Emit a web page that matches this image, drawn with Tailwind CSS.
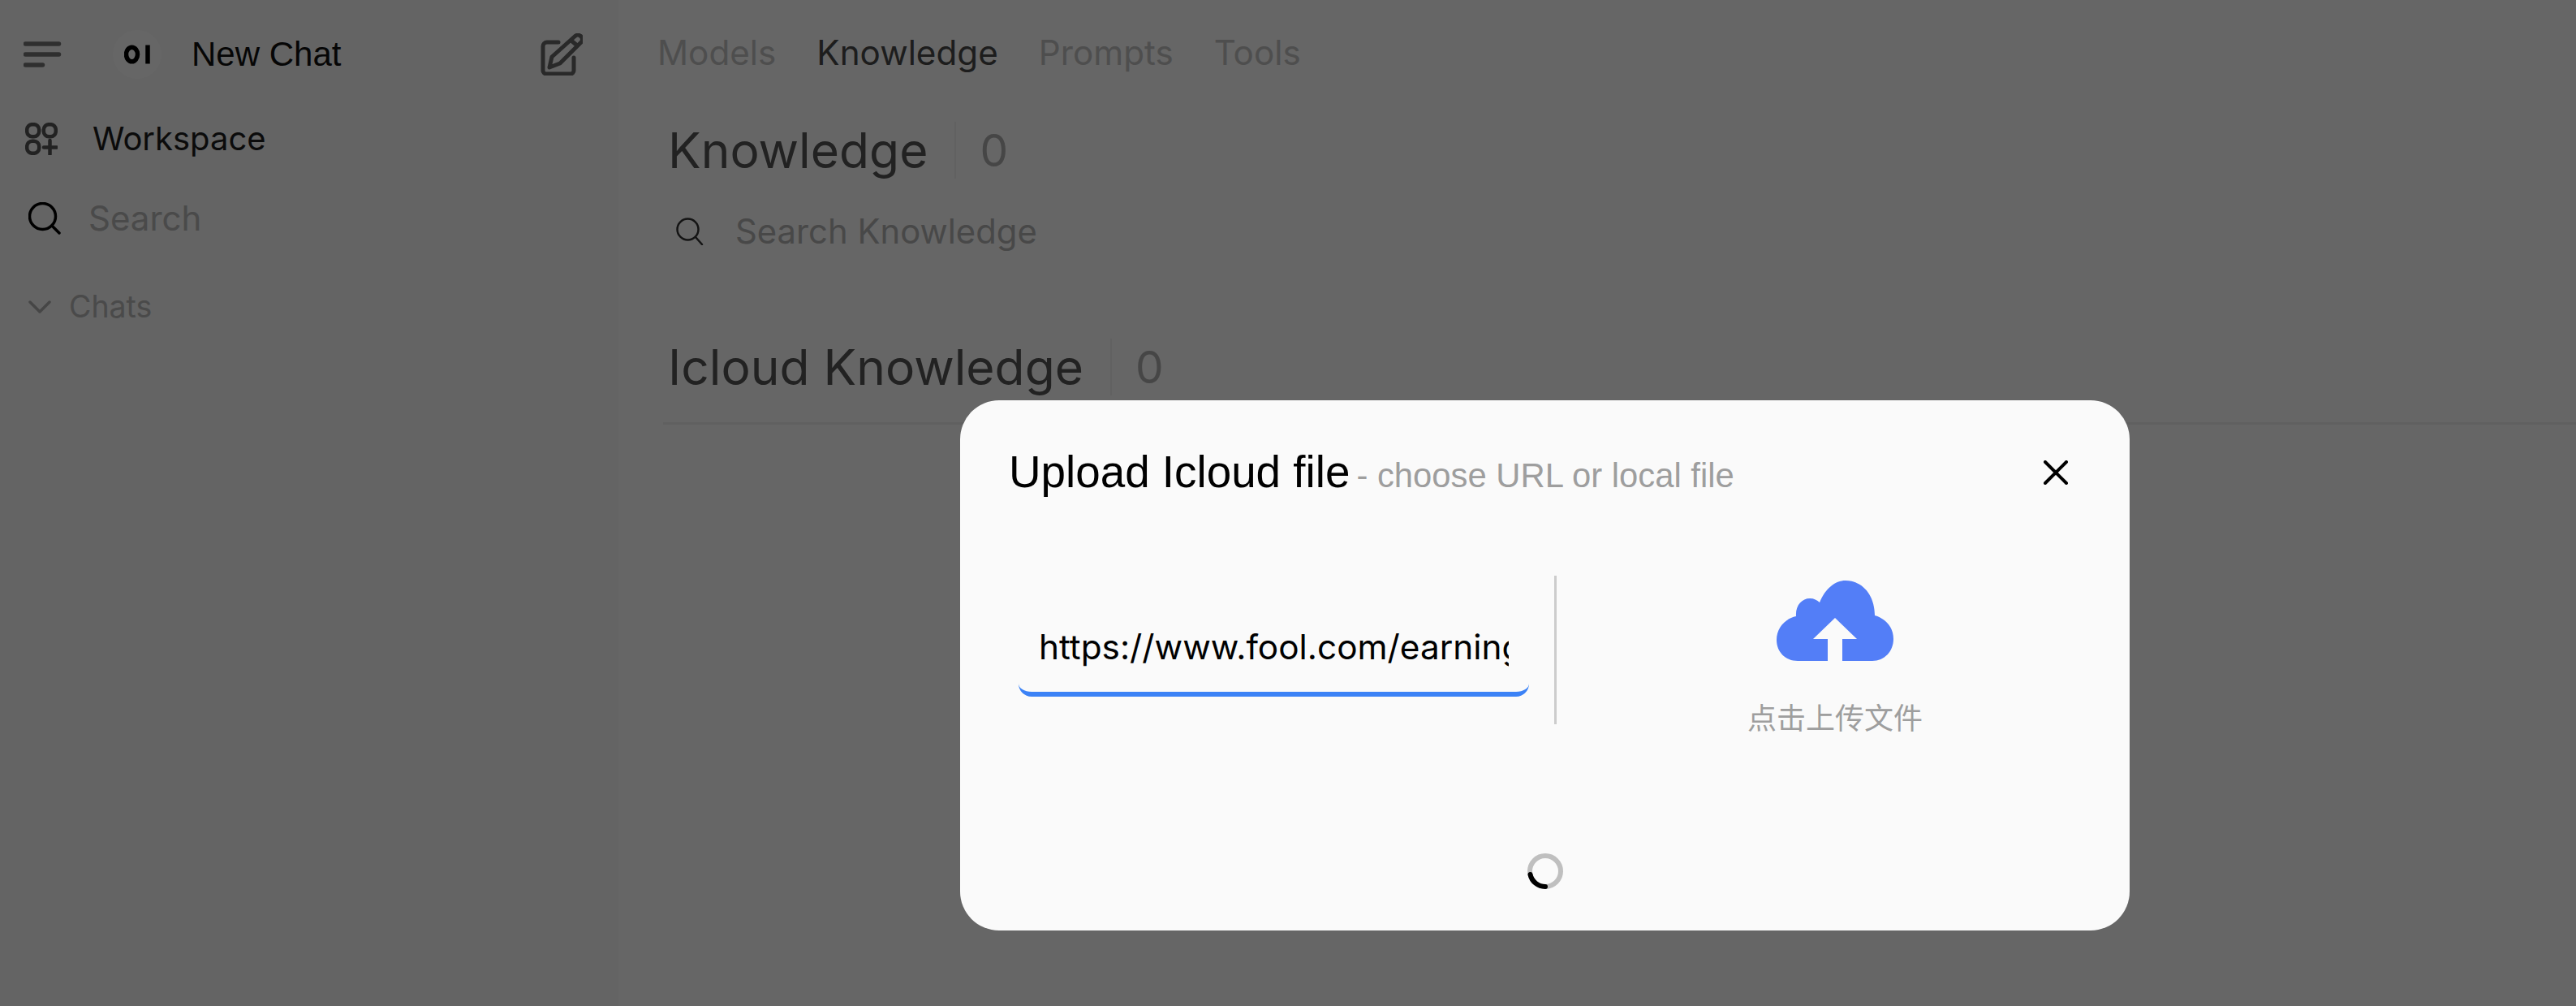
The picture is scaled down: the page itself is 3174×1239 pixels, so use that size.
<!DOCTYPE html>
<html><head><meta charset="utf-8"><script src="https://cdn.jsdelivr.net/npm/@tailwindcss/browser@4"></script></head>
<body class="bg-white font-['Inter','Noto_Sans_CJK_SC',sans-serif]">
<div class="relative w-[3174px] h-[1239px] overflow-hidden flex">
  <aside class="w-[762px] shrink-0 bg-[#f9f9f9] h-full">
    <div class="flex items-center h-[52px] mt-[41px] pl-[29px] pr-[44px]">
      <svg class="w-[48px] h-[48px] text-[#777]" viewBox="0 0 48 48" fill="none" stroke="currentColor" stroke-width="5.500" stroke-linecap="round"><path d="M2.500 11h41M2.500 24h41M2.500 37h21"/></svg>
      <div class="ml-[62px] w-[60px] h-[60px] rounded-full bg-white flex items-center justify-center shrink-0">
        <svg class="w-[33px] h-[24px]" viewBox="0 0 33 24" fill="none" stroke="#000"><ellipse cx="9.500" cy="12" rx="7" ry="8.800" stroke-width="5.500"/><path d="M29 .5v23" stroke-width="5.500"/></svg>
      </div>
      <span class="ml-[37px] text-[42px] font-['Liberation_Sans'] text-[#111] leading-[52px]">New Chat</span>
      <svg class="ml-auto w-[52px] h-[52px] text-[#666]" viewBox="0 0 52 52" fill="none" stroke="currentColor" stroke-width="5" stroke-linecap="round" stroke-linejoin="round"><path d="M22 11H8a5 5 0 0 0-5 5v30a4 4 0 0 0 4 4h30a4 4 0 0 0 4-4V30"/><path d="M42 4a5 5 0 0 1 8 7L24 37l-13 5 3-13L42 4Z"/><path d="M38 9l7 6"/></svg>
    </div>
    <div class="flex items-center h-[52px] mt-[52px] pl-[31px]">
      <svg class="w-[40px] h-[40px] text-[#555]" viewBox="0 0 40 40" fill="none" stroke="currentColor" stroke-width="4.500"><rect x="2.200" y="2.200" width="15" height="15" rx="6.500"/><rect x="22.800" y="2.200" width="15" height="15" rx="6.500"/><rect x="2.200" y="22.800" width="15" height="15" rx="6.500"/><path d="M30.500 22v17M23 30.500h16" stroke-linecap="round"/></svg>
      <span class="ml-[43px] text-[40px] text-[#1c1c1c] leading-[52px]">Workspace</span>
    </div>
    <div class="flex items-center h-[52px] mt-[46px] pl-[35px]">
      <svg class="w-[40px] h-[40px] text-[#000]" viewBox="0 0 40 40" fill="none" stroke="currentColor" stroke-width="3.500" stroke-linecap="round"><circle cx="17.500" cy="17.500" r="16"/><path d="M29 29l9 9"/></svg>
      <span class="ml-[34px] text-[42px] text-[#b8b8b8] leading-[52px]">Search</span>
    </div>
    <div class="flex items-center h-[46px] mt-[60px] pl-[35px]">
      <svg class="w-[28px] h-[18px] text-[#b0b0b0]" viewBox="0 0 28 18" fill="none" stroke="currentColor" stroke-width="3.500" stroke-linecap="round" stroke-linejoin="round"><path d="M2 3l12 12L26 3"/></svg>
      <span class="ml-[22px] text-[37.500px] text-[#b8b8b8] leading-[46px]">Chats</span>
    </div>
  </aside>
  <main class="flex-1 pl-[48px]">
    <nav class="flex gap-[50px] mt-[38px] text-[42.200px] leading-[54px] text-[#c4c4c4]">
      <span>Models</span><span class="text-[#4a4a4a]">Knowledge</span><span>Prompts</span><span>Tools</span>
    </nav>
    <div class="flex items-center mt-[58px] ml-[13px] h-[70px]">
      <span class="text-[60.500px] text-[#555] leading-[70px]">Knowledge</span>
      <span class="w-[2px] h-[70px] bg-[#f3f3f3] ml-[33px] mr-[29px]"></span>
      <span class="text-[55px] text-[#b0b0b0] leading-[64px]">0</span>
    </div>
    <div class="flex items-center mt-[39px] ml-[23px] h-[52px]">
      <svg class="w-[34px] h-[34px] text-[#333]" viewBox="0 0 34 34" fill="none" stroke="currentColor" stroke-width="2.500" stroke-linecap="round"><circle cx="14.500" cy="14.500" r="13"/><path d="M24 24l8 9"/></svg>
      <span class="ml-[39px] text-[41.800px] text-[#b4b4b4] leading-[52px]">Search Knowledge</span>
    </div>
    <div class="flex items-center mt-[106px] ml-[13px] h-[70px]">
      <span class="text-[60.500px] text-[#555] leading-[70px]">Icloud Knowledge</span>
      <span class="w-[2px] h-[70px] bg-[#f3f3f3] ml-[33px] mr-[29px]"></span>
      <span class="text-[55px] text-[#b0b0b0] leading-[64px]">0</span>
    </div>
    <div class="h-[3px] bg-[#f0f0f0] mt-[33px] ml-[7px]"></div>
  </main>
  <div class="absolute inset-0 bg-black/60"></div>
  <div class="absolute left-[1183px] top-[493px] w-[1441px] h-[653px] rounded-[48px] bg-[#fafafa] px-[62px] pt-[56px]">
    <div class="flex items-baseline relative h-[64px] font-['Liberation_Sans']">
      <span class="ml-[-2px] text-[54.800px] leading-[64px] text-black">Upload Icloud file</span>
      <span class="ml-[8px] text-[41.800px] leading-[64px] text-[#9e9e9e]">- choose URL or local file</span>
      <svg class="absolute right-[14px] top-[18px] w-[30px] h-[30px]" viewBox="0 0 30 30" fill="none" stroke="#000" stroke-width="4" stroke-linecap="round"><path d="M2 2l26 26M28 2L2 28"/></svg>
    </div>
    <div class="flex mt-[96px] mr-[-42px]">
      <div class="w-[670px] flex items-end h-[183px] pb-[34px]">
        <div class="ml-[10px] w-[629px] h-[87px] border-b-[6px] border-[#3b82f6] rounded-[16px] px-[25px] overflow-hidden">
          <div class="w-[579px] overflow-hidden whitespace-nowrap text-[42.300px] leading-[52px] text-black">https://www.fool.com/earnings/call-transcripts</div>
        </div>
      </div>
      <div class="w-[3px] h-[183px] bg-[#cccccc]"></div>
      <div class="flex-1 flex flex-col items-center pt-[6px]">
        <svg class="w-[144px] h-[100px]" viewBox="0 0 144 100" fill="#537ef7"><path d="M26 99C11 99 0 88 0 73c0-14 10-26 24-29-1-13 7-22 17-22 5 0 9 2 12 5C60 10 72 0 85 0c21 0 36 18 36 43 14 4 23 15 23 29 0 15-11 27-26 27H81V72h18L72 46 45 72h18v27Z"/></svg>
        <span class="mt-[46px] text-[36px] leading-[48px] text-[#9e9e9e]">点击上传文件</span>
      </div>
    </div>
    <div class="flex justify-center mt-[142px]">
      <svg class="w-[44px] h-[44px]" viewBox="0 0 44 44" fill="none" stroke-width="6"><circle cx="22" cy="22" r="19" stroke="#bfbfbf"/><path d="M3.500 26A19 19 0 0 0 22 41" stroke="#000" stroke-linecap="round"/></svg>
    </div>
  </div>
</div>
</body></html>
